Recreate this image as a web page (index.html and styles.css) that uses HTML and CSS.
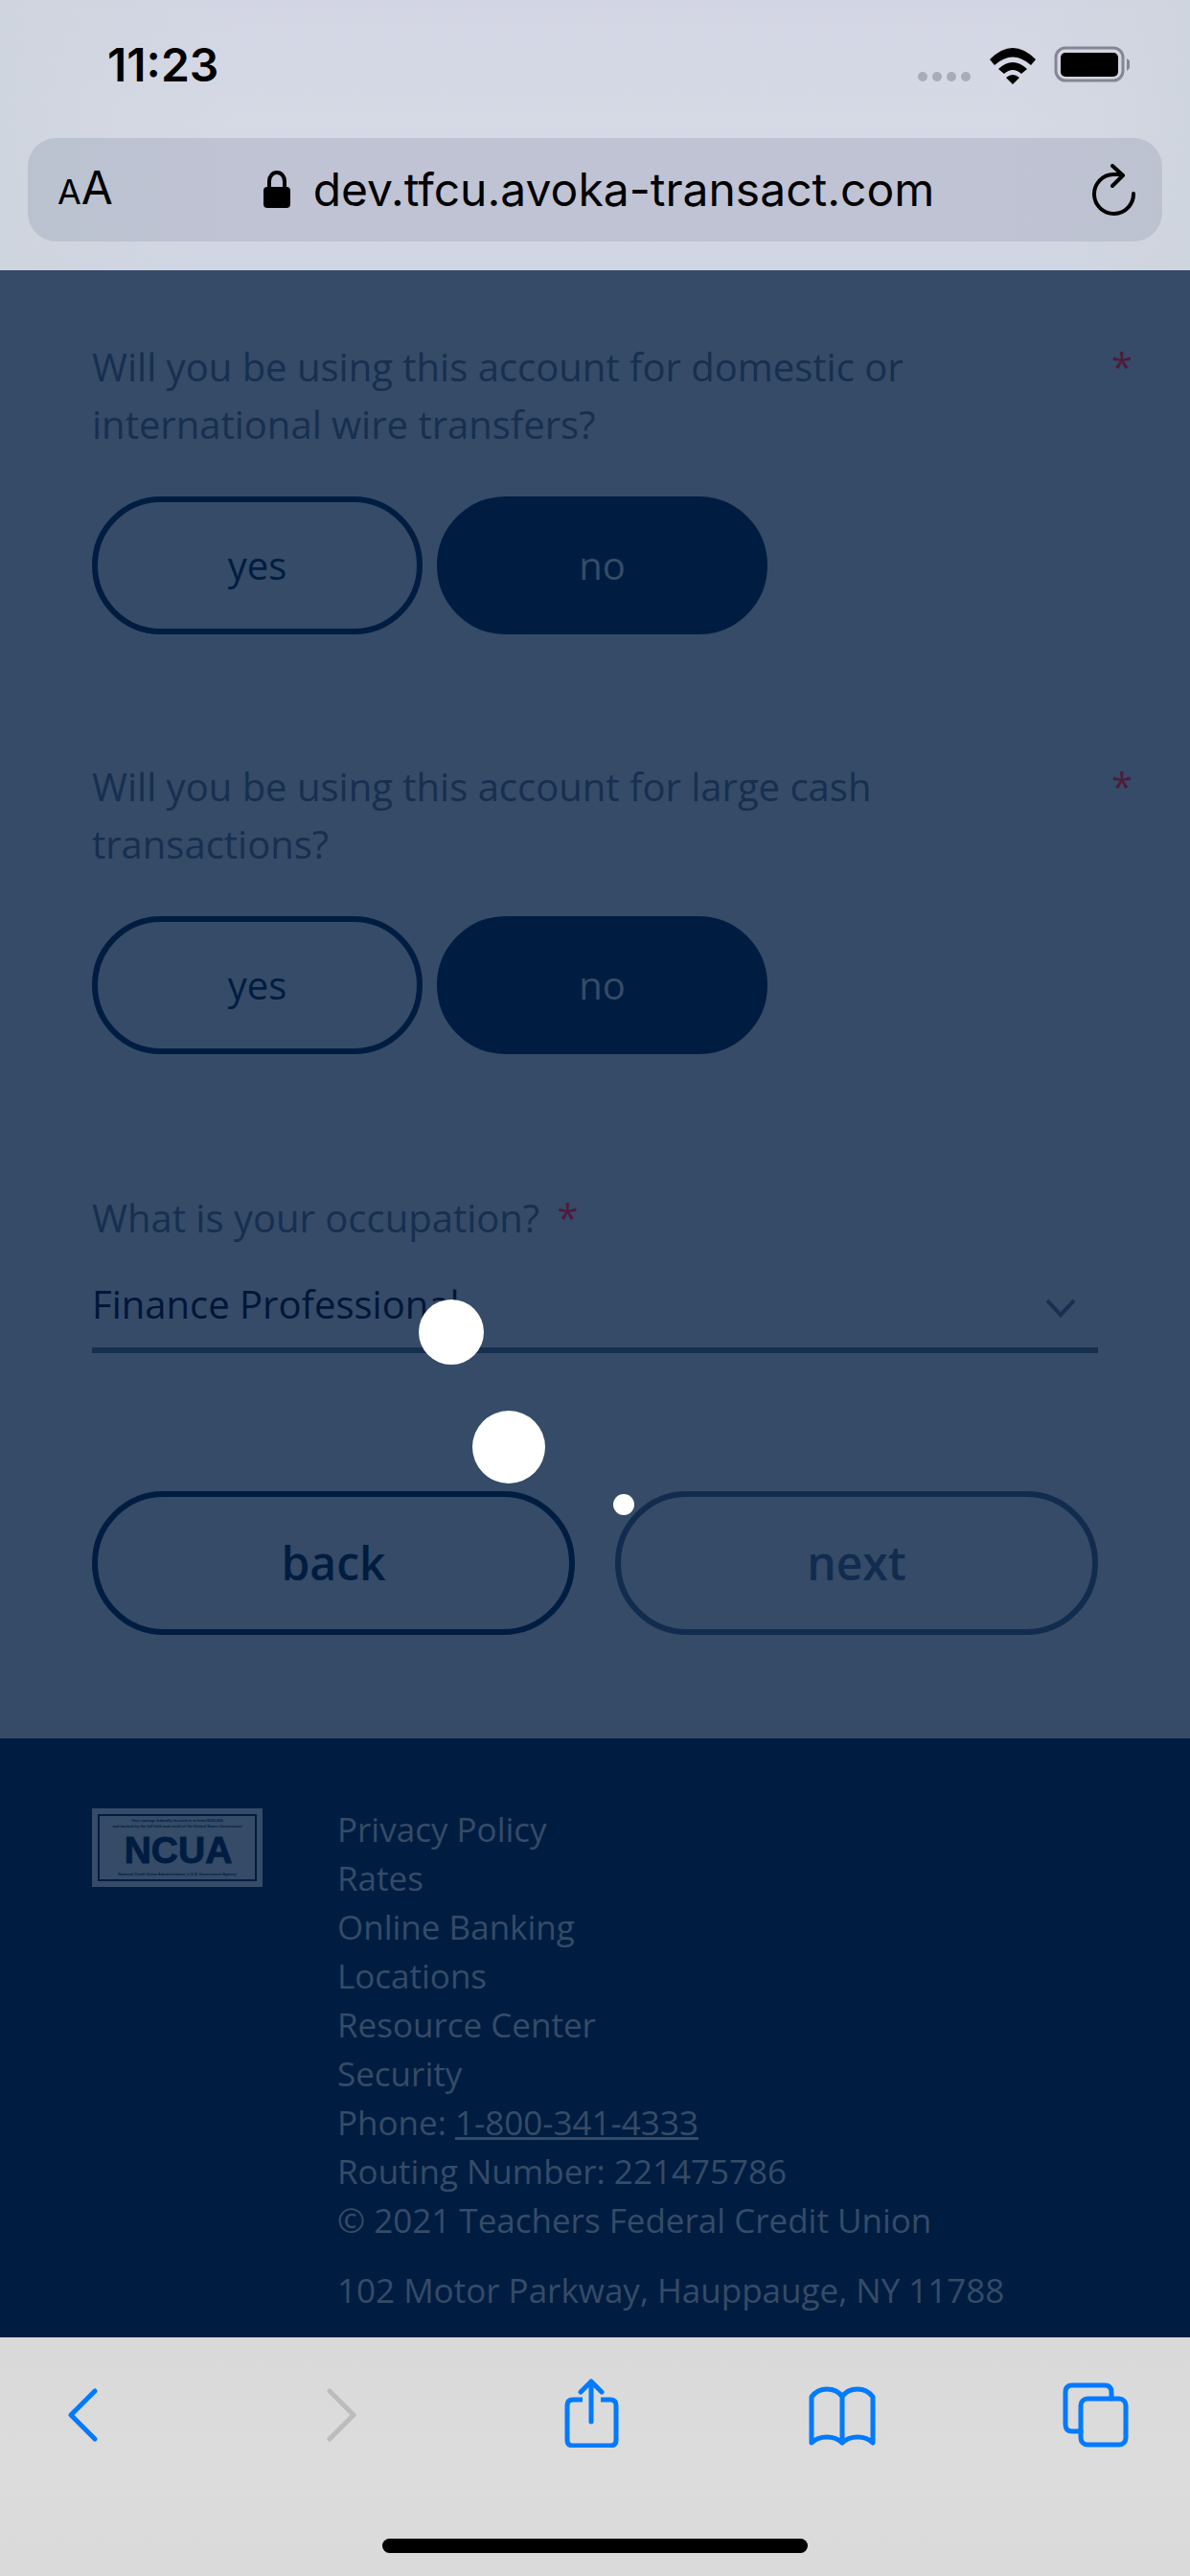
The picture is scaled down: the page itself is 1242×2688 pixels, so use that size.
FILE: index.html
```html
<!DOCTYPE html>
<html lang="en">
<head>
<meta charset="utf-8">
<meta name="viewport" content="width=device-width, initial-scale=1">
<title>Account questions</title>
<link rel="stylesheet" href="styles.css">
</head>
<body>
<header class="browser-top">
  <div class="status">
    <time class="clock">11:23</time>
    <svg class="status-icons" viewBox="0 0 224 40" aria-hidden="true">
      <g fill="#a9abb8"><circle cx="8" cy="32" r="5"/><circle cx="23" cy="32" r="5"/><circle cx="38" cy="32" r="5"/><circle cx="53" cy="32" r="5"/></g>
      <path d="M78 14Q102-10 126 14L121 20Q102 3 83 20Z"/>
      <path d="M87 24Q102 10 117 24L111 29Q102 21 93 29Z"/>
      <path d="M95 33Q102 27 109 33L102 40Z"/>
      <rect x="147" y="2" width="70" height="34" rx="10" fill="none" stroke="#858692" stroke-width="3"/>
      <rect x="152" y="7" width="60" height="25" rx="5"/>
      <path d="M221 13Q225 15 225 19T221 26Z" fill="#858692"/>
    </svg>
  </div>
  <div class="address">
    <button class="text-size" type="button" aria-label="Text size"><small>A</small>A</button>
    <button class="url" type="button">
      <svg class="lock" viewBox="0 0 28 40" aria-hidden="true"><path d="M6 19V11a8 9 0 0 1 16 0V19" fill="none" stroke="#000" stroke-width="4"/><rect y="17" width="28" height="22" rx="4"/></svg>
      <span>dev.tfcu.avoka-transact.com</span>
    </button>
    <button class="reload" type="button" aria-label="Reload">
      <svg viewBox="0 0 46 54" aria-hidden="true"><path d="M43 31A20.500 20.500 0 1 1 22 11H31M21 2L32 12L21 23" fill="none" stroke="#000" stroke-width="4" stroke-linecap="round" stroke-linejoin="round"/></svg>
    </button>
  </div>
</header>

<div class="page">
  <main>
    <form class="questions">
      <fieldset class="question">
        <legend class="question-text"><span>Will you be using this account for domestic or international wire transfers?</span><span class="required">*</span></legend>
        <div class="choices">
          <label class="choice"><input type="radio" name="wire" value="yes">yes</label>
          <label class="choice"><input type="radio" name="wire" value="no" checked>no</label>
        </div>
      </fieldset>
      <fieldset class="question">
        <legend class="question-text"><span>Will you be using this account for large cash transactions?</span><span class="required">*</span></legend>
        <div class="choices">
          <label class="choice"><input type="radio" name="cash" value="yes">yes</label>
          <label class="choice"><input type="radio" name="cash" value="no" checked>no</label>
        </div>
      </fieldset>
      <div class="field">
        <label for="occupation">What is your occupation? <span class="required">*</span></label>
        <div class="select-box">
          <select id="occupation"><option>Finance Professional</option></select>
          <svg class="chevron" viewBox="0 0 32 20" aria-hidden="true"><path d="M2 2L16 17L30 2" fill="none" stroke="#172f50" stroke-width="4"/></svg>
        </div>
      </div>
      <div class="actions">
        <button class="action" type="button">back</button>
        <button class="action action-next" type="button">next</button>
      </div>
    </form>
  </main>

  <footer class="footer">
    <svg class="ncua" viewBox="0 0 178 82" role="img" aria-label="NCUA">
      <rect width="178" height="82" fill="#354b67"/>
      <rect x="7" y="7" width="164" height="68" fill="none" stroke="#001d41" stroke-width="2"/>
      <g fill="#001d41" text-anchor="middle" font-family="Liberation Sans, sans-serif" font-weight="700">
        <text x="89" y="14" font-size="4">Your savings federally insured to at least $250,000</text>
        <text x="89" y="20" font-size="4">and backed by the full faith and credit of the United States Government</text>
        <text x="90" y="57" font-size="39" stroke="#001d41" stroke-width="1">NCUA</text>
        <text x="89" y="70" font-size="4">National Credit Union Administration, a U.S. Government Agency</text>
      </g>
    </svg>
    <div class="footer-text">
      <ul class="links">
        <li><a href="#">Privacy Policy</a></li>
        <li><a href="#">Rates</a></li>
        <li><a href="#">Online Banking</a></li>
        <li><a href="#">Locations</a></li>
        <li><a href="#">Resource Center</a></li>
        <li><a href="#">Security</a></li>
        <li>Phone: <a class="phone" href="tel:18003414333">1-800-341-4333</a></li>
        <li>Routing Number: 221475786</li>
        <li>© 2021 Teachers Federal Credit Union</li>
      </ul>
      <address>102 Motor Parkway, Hauppauge, NY 11788</address>
    </div>
  </footer>

  <div class="loading" role="status" aria-label="Loading">
    <svg class="spinner" viewBox="0 0 480 480" fill="#fff"><circle cx="90" cy="269" r="34"/><circle cx="150" cy="389" r="38"/><circle cx="270" cy="449" r="11"/></svg>
  </div>
</div>

<nav class="toolbar" aria-label="Browser">
  <div class="tools">
    <button type="button" aria-label="Back"><svg viewBox="0 0 70 72"><path d="M47 13L22 38L47 63"/></svg></button>
    <button class="disabled" type="button" aria-label="Forward" disabled><svg viewBox="0 0 70 72"><path d="M28 13L53 38L28 63"/></svg></button>
    <button type="button" aria-label="Share"><svg viewBox="0 0 70 72"><path d="M37 45V4M26 14L37 3L48 14"/><path stroke-linecap="butt" d="M28 22H18Q12 22 12 28V64Q12 70 18 70H57Q63 70 63 64V28Q63 22 57 22H47"/></svg></button>
    <button type="button" aria-label="Bookmarks"><svg viewBox="0 0 70 72"><path d="M35 19V67M35 19Q30 11 19 11Q9 11 3 19V67Q9 61 19 61Q29 61 35 67Q41 61 51 61Q61 61 67 67V19Q61 11 51 11Q40 11 35 19"/></svg></button>
    <button type="button" aria-label="Tabs"><svg viewBox="0 0 70 72"><path d="M20 55H11Q4 55 4 48V14Q4 7 11 7H45Q52 7 52 14V21"/><rect x="20" y="21" width="47" height="48" rx="7"/></svg></button>
  </div>
  <div class="home-bar"></div>
</nav>
</body>
</html>
```
FILE: styles.css
```css
* {
  box-sizing: border-box;
}

body {
  margin: 0;
  min-height: 100vh;
  display: flex;
  flex-direction: column;
  font-family: "Open Sans", "Noto Sans", sans-serif;
  font-size: 40px;
  line-height: 60px;
  color: #172f50;
}

button {
  margin: 0;
  padding: 0;
  border: 0;
  background: none;
  font: inherit;
  color: inherit;
}

svg {
  display: block;
  flex: none;
}

/* Browser chrome, top */
.browser-top {
  padding: 0 29px 30px;
  background: linear-gradient(90deg, #cfd5de 0, #d5d9e600 20%, #d5d9e600 85%, #cfd5de 100%), linear-gradient(#d3d5e4, #d6dae5 45%, #d0d5e4);
  font-family: Inter, sans-serif;
  color: #000;
}

.status {
  height: 144px;
  padding: 38px 34px 46px 83px;
  display: flex;
  justify-content: space-between;
  align-items: center;
}

.clock {
  font-size: 48px;
  font-weight: 600;
}

.status-icons {
  width: 224px;
  height: 40px;
}

.address {
  height: 108px;
  padding: 0 27px 0 31px;
  display: grid;
  grid-template-columns: 64px 1fr 60px;
  align-items: center;
  border-radius: 30px;
  background: linear-gradient(90deg, #bac2cf, #c0c3d4 20%, #c0c3d4 85%, #bcc2d0);
}

.text-size {
  text-align: left;
  font-size: 48px;
  white-space: nowrap;
}

.text-size small {
  font-size: 36px;
}

.url {
  display: flex;
  justify-content: center;
  align-items: center;
  gap: 24px;
  font-size: 48px;
}

.lock {
  width: 28px;
  height: 40px;
}

.reload {
  justify-self: end;
}

.reload svg {
  width: 46px;
  height: 54px;
}

/* Page */
.page {
  position: relative;
  flex: 1;
  display: flex;
  flex-direction: column;
  background: #001d41;
}

main {
  padding: 71px 96px 108px;
  background: #354b67;
}

.questions {
  display: flex;
  flex-direction: column;
}

.question {
  min-width: 0;
  margin: 0 -36px 129px 0;
  padding: 0;
  border: 0;
}

.question-text {
  width: 100%;
  margin-bottom: 45px;
  padding: 0;
  display: flex;
  justify-content: space-between;
  gap: 80px;
}

.required {
  color: #4f1a3c;
}

.choices {
  display: flex;
  gap: 15px;
}

.choice {
  width: 345px;
  height: 144px;
  display: flex;
  justify-content: center;
  align-items: center;
  border: 6px solid #001d41;
  border-radius: 72px;
  color: #001d41;
}

.choice input {
  position: absolute;
  opacity: 0;
}

.choice:has(input:checked) {
  background: #001d41;
  color: #354b67;
}

.field {
  margin-top: 12px;
}

.field label {
  display: block;
  margin-bottom: 27px;
}

.field .required {
  margin-left: 8px;
}

.select-box {
  display: grid;
  align-items: center;
}

.select-box > * {
  grid-area: 1 / 1;
}

.select-box select {
  appearance: none;
  width: 100%;
  height: 84px;
  padding: 0 0 12px;
  border: 0;
  border-bottom: 6px solid #172f4f;
  border-radius: 0;
  background: none;
  font: inherit;
  color: #001639;
}

.chevron {
  width: 32px;
  height: 20px;
  margin: 0 23px 10px;
  justify-self: end;
  pointer-events: none;
}

.actions {
  margin-top: 144px;
  display: grid;
  grid-template-columns: 1fr 1fr;
  gap: 42px;
}

.action {
  height: 150px;
  border: 6px solid #001d41;
  border-radius: 75px;
  font-size: 48px;
  font-weight: 600;
  color: #001d41;
}

.action-next {
  border-color: #112c4f;
  color: #112c4f;
}

/* Footer */
.footer {
  padding: 69px 96px 23px;
  display: flex;
  gap: 78px;
  font-size: 35px;
  line-height: 51px;
  color: #354b67;
}

.ncua {
  width: 178px;
  height: 82px;
  margin-top: 4px;
}

.links {
  margin: 0 0 22px;
  padding: 0;
  list-style: none;
}

.links a {
  color: inherit;
  text-decoration: none;
}

.links .phone {
  text-decoration: underline;
}

address {
  font-style: normal;
}

/* Loading indicator over the page */
.loading {
  position: absolute;
  inset: 0;
  display: flex;
  justify-content: center;
  align-items: center;
}

.spinner {
  width: 480px;
  height: 480px;
}

/* Browser chrome, bottom */
.toolbar {
  padding: 43px 0 24px;
  background: linear-gradient(#d9d9d9, #dcdcdc 50%, #dadada);
}

.tools {
  padding: 0 64px 0 52px;
  display: flex;
  justify-content: space-between;
}

.tools svg {
  width: 70px;
  height: 72px;
  fill: none;
  stroke: #007aff;
  stroke-width: 5;
  stroke-linecap: round;
  stroke-linejoin: round;
}

.tools .disabled svg {
  stroke: #bcbcbc;
}

.home-bar {
  width: 444px;
  height: 15px;
  margin: 95px auto 0;
  border-radius: 8px;
  background: #000;
}
```
